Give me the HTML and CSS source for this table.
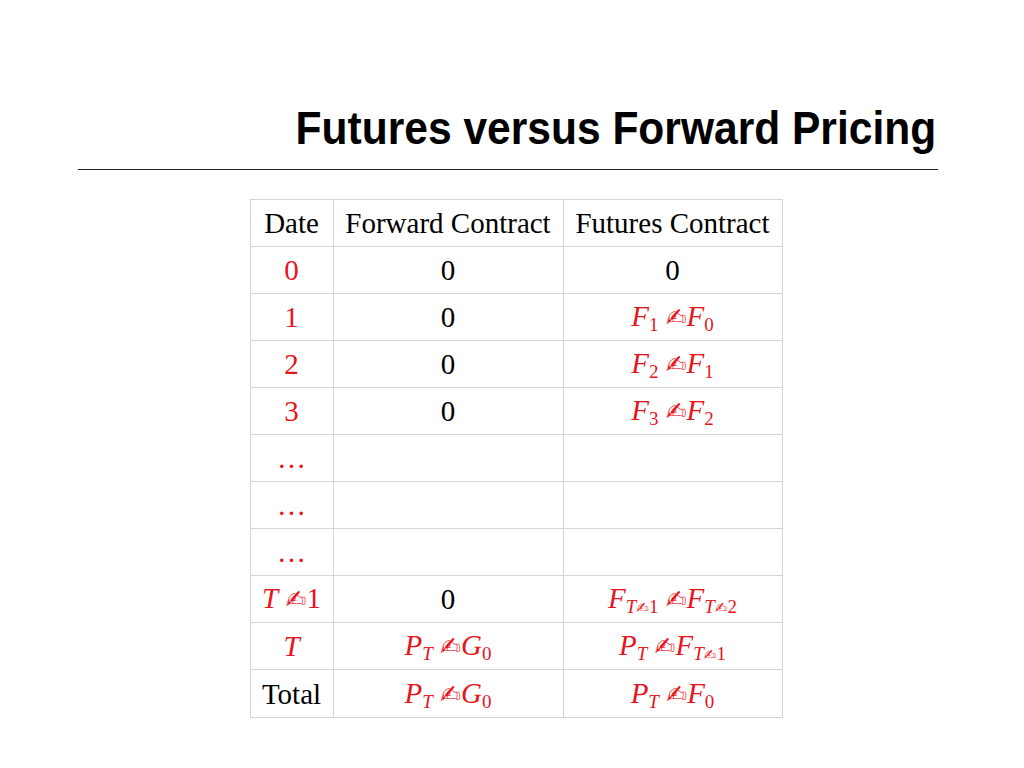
FILE: index.html
```html
<!DOCTYPE html>
<html>
<head>
<meta charset="utf-8">
<link rel="stylesheet" href="styles.css">
</head>
<body>
<div class="slide">
  <header class="head">
    <h1 class="title">Futures versus Forward Pricing</h1>
    <div class="rule"></div>
  </header>
  <div class="tablewrap">
    <table class="grid">
      <colgroup><col class="c1"><col class="c2"><col class="c3"></colgroup>
      <tr><td>Date</td><td>Forward Contract</td><td>Futures Contract</td></tr>
      <tr><td class="r">0</td><td>0</td><td>0</td></tr>
      <tr><td class="r">1</td><td>0</td><td class="r"><i>F</i><sub>1</sub> <span class="m">✍</span><i>F</i><sub>0</sub></td></tr>
      <tr><td class="r">2</td><td>0</td><td class="r"><i>F</i><sub>2</sub> <span class="m">✍</span><i>F</i><sub>1</sub></td></tr>
      <tr><td class="r">3</td><td>0</td><td class="r"><i>F</i><sub>3</sub> <span class="m">✍</span><i>F</i><sub>2</sub></td></tr>
      <tr><td class="r">…</td><td></td><td></td></tr>
      <tr><td class="r">…</td><td></td><td></td></tr>
      <tr><td class="r">…</td><td></td><td></td></tr>
      <tr><td class="r"><i>T</i> <span class="m">✍</span>1</td><td>0</td><td class="r"><i>F</i><sub><i>T</i><span class="ms">✍</span>1</sub> <span class="m">✍</span><i>F</i><sub><i>T</i><span class="ms">✍</span>2</sub></td></tr>
      <tr><td class="r"><i>T</i></td><td class="r"><i>P</i><sub><i>T</i></sub> <span class="m">✍</span><i>G</i><sub>0</sub></td><td class="r"><i>P</i><sub><i>T</i></sub> <span class="m">✍</span><i>F</i><sub><i>T</i><span class="ms">✍</span>1</sub></td></tr>
      <tr><td>Total</td><td class="r"><i>P</i><sub><i>T</i></sub> <span class="m">✍</span><i>G</i><sub>0</sub></td><td class="r"><i>P</i><sub><i>T</i></sub> <span class="m">✍</span><i>F</i><sub>0</sub></td></tr>
    </table>
  </div>
</div>
</body>
</html>
```

FILE: styles.css
```css
html, body {
  margin: 0;
  padding: 0;
  background: #ffffff;
}
.slide {
  width: 1024px;
  height: 768px;
  position: relative;
  overflow: hidden;
}
.head {
  padding: 101px 86px 0 78px;
}
.title {
  margin: 0;
  text-align: right;
  font-family: "Liberation Sans", Arial, sans-serif;
  font-weight: bold;
  font-size: 47px;
  line-height: 54px;
  color: #000;
  padding-right: 2px;
  transform: scaleX(0.905);
  transform-origin: right center;
  white-space: nowrap;
}
.rule {
  margin-top: 14px;
  height: 1px;
  background: #222;
}
.tablewrap {
  display: flex;
  justify-content: center;
  padding-top: 29px;
  padding-left: 8px;
}
.grid {
  border-collapse: collapse;
  font-family: "Liberation Serif", "Times New Roman", serif;
  font-size: 29px;
  color: #000;
}
.c1 { width: 83px; }
.c2 { width: 230px; }
.c3 { width: 219px; }
.grid td {
  border: 1px solid #d4d4d4;
  height: 46px;
  padding: 0;
  text-align: center;
  vertical-align: middle;
  white-space: nowrap;
  line-height: 30px;
}
.grid tr:last-child td { height: 47px; }
.r { color: #e8141c; }
.grid sub {
  font-size: 19px;
  vertical-align: -5px;
  line-height: 0;
}
.m {
  font-family: "DejaVu Sans", sans-serif;
  font-size: 25px;
}
.ms {
  font-family: "DejaVu Sans", sans-serif;
  font-size: 15px;
}
```
